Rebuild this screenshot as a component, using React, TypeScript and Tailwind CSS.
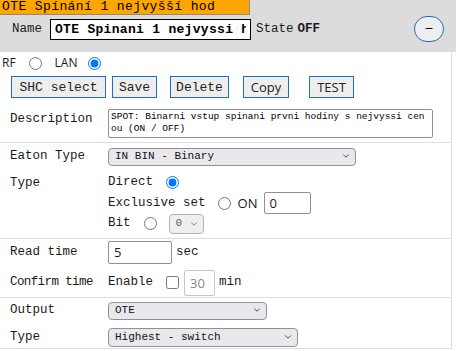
import { ChevronDown } from "lucide-react";

const mono = "font-['Liberation_Mono','DejaVu_Sans_Mono',monospace]";
const sans = "font-['Open_Sans','Liberation_Sans',sans-serif]";

function Sel({ className = "", value }: { className?: string; value: string }) {
  return (
    <div className={`relative ${className}`}>
      <select
        defaultValue={value}
        className={`h-full w-full appearance-none rounded-[4px] border border-[#8f8f9d] bg-[#e9e9ed] pl-[6px] text-[11px] leading-none text-[#111] ${mono}`}
      >
        <option value={value}>{value}</option>
      </select>
      <ChevronDown className="pointer-events-none absolute right-[5px] top-1/2 h-[10px] w-[10px] -translate-y-1/2 text-[#333]" strokeWidth={2} />
    </div>
  );
}

function Btn({ label, className = "", font = mono }: { label: string; className?: string; font?: string }) {
  return (
    <button className={`h-[22px] border border-[#1f6fbf] bg-[#eeeeee] text-[13px] leading-none text-[#222] ${font} ${className}`}>
      {label}
    </button>
  );
}

function Radio({ checked = false, className = "" }: { checked?: boolean; className?: string }) {
  return <input type="radio" defaultChecked={checked} className={`m-0 h-[13px] w-[13px] ${className}`} />;
}

export default function App() {
  return (
    <div className={`h-[351px] w-[456px] overflow-hidden bg-white text-[12.5px] text-[#1a1a1a] ${mono}`}>
      {/* header */}
      <div className="h-[52px] bg-[#dcdcdc]">
        <div className="h-[15px] w-[250px] border-b border-r border-[#8a8a8a] bg-[#ffa500] pl-[2px] text-[13px] leading-[14px] tracking-[0.4px] text-black">
          OTE Spínání 1 nejvyšší hod
        </div>
        <div className="mt-[1px] flex items-center">
          <span className="ml-[12px] w-[38px]">Name</span>
          <input
            defaultValue="OTE Spinani 1 nejvyssi hod"
            className="h-[21px] w-[201px] border border-black bg-white px-[4px] text-[13px] font-bold tracking-[0.3px] text-black outline-none"
          />
          <span className="ml-[5px]">State</span>
          <span className="ml-[4px] font-bold">OFF</span>
          <button className="ml-auto mr-[12px] flex h-[26px] w-[30px] items-center justify-center rounded-full border border-[#1f6fbf] bg-[#eeeeee] text-[14px] text-[#111]">
            −
          </button>
        </div>
      </div>

      {/* body */}
      <div className="h-[297px] w-[452px] border-b border-r border-[#dedede]">
        <div className={`flex h-[21px] items-center pt-[1px] text-[12px] ${sans}`}>
          <span className="ml-[2px]">RF</span>
          <Radio className="ml-[13px]" />
          <span className="ml-[13px]">LAN</span>
          <Radio checked className="ml-[10px]" />
        </div>

        <div className="mt-[3px] flex">
          <Btn label="SHC select" className="ml-[11px] w-[95px]" />
          <Btn label="Save" className="ml-[6px] w-[45px]" />
          <Btn label="Delete" className="ml-[13px] w-[59px]" />
          <Btn label="Copy" font={sans} className="ml-[14px] w-[46px]" />
          <Btn label="TEST" font={sans} className="ml-[20px] w-[45px]" />
        </div>

        <div className="mt-[11px] flex">
          <span className="ml-[10px] w-[98px] pt-[1px]">Description</span>
          <textarea
            defaultValue="SPOT: Binarni vstup spinani prvni hodiny s nejvyssi cenou (ON / OFF)"
            className="h-[29px] w-[325px] resize-none overflow-hidden break-all rounded-[2px] border border-[#8f8f9d] px-[2px] py-[1px] text-[9.5px] leading-[12px] text-black"
          />
        </div>

        <div className="mt-[4px] border-t border-[#dedede]" />

        <div className="mt-[4px] flex items-center">
          <span className="ml-[10px] w-[98px]">Eaton Type</span>
          <Sel value="IN BIN - Binary" className="h-[18px] w-[248px]" />
        </div>

        <div className="mt-[7px] flex">
          <span className="ml-[10px] w-[98px] leading-[20px]">Type</span>
          <div className="flex flex-col">
            <div className="flex h-[20px] items-center">
              <span>Direct</span>
              <Radio checked className="ml-[13px]" />
            </div>
            <div className="flex h-[21px] items-center">
              <span>Exclusive set</span>
              <Radio className="ml-[12px]" />
              <span className={`ml-[7px] text-[13px] ${sans}`}>ON</span>
              <input
                defaultValue="0"
                className={`ml-[7px] h-[22px] w-[47px] rounded-[2px] border border-[#8f8f9d] px-[4px] text-[13px] ${sans}`}
              />
            </div>
            <div className="flex h-[20px] items-center">
              <span>Bit</span>
              <Radio className="ml-[13px]" />
              <Sel value="0" className="ml-[12px] h-[20px] w-[35px] opacity-70" />
            </div>
          </div>
        </div>

        <div className="mt-[4px] border-t border-[#dedede]" />

        <div className="mt-[2px] flex items-center">
          <span className="ml-[10px] w-[98px]">Read time</span>
          <input
            defaultValue="5"
            className={`h-[23px] w-[64px] rounded-[2px] border border-[#8f8f9d] px-[5px] text-[13px] ${sans}`}
          />
          <span className="ml-[4px]">sec</span>
        </div>

        <div className="mt-[6px] flex items-center">
          <span className="ml-[10px] w-[98px] tracking-[-0.6px]">Confirm time</span>
          <span>Enable</span>
          <input type="checkbox" className="m-0 ml-[13px] h-[13px] w-[13px]" />
          <input
            disabled
            defaultValue="30"
            className={`ml-[5px] h-[26px] w-[31px] rounded-[2px] border border-[#c8c8cc] bg-white px-[5px] text-[13px] text-[#888] ${sans}`}
          />
          <span className="ml-[4px]">min</span>
        </div>

        <div className="mt-[1px] border-t border-[#dedede]" />

        <div className="mt-[3px] flex items-center">
          <span className="ml-[10px] w-[98px]">Output</span>
          <Sel value="OTE" className="h-[18px] w-[159px]" />
        </div>

        <div className="mt-[8px] flex items-center">
          <span className="ml-[10px] w-[98px]">Type</span>
          <Sel value="Highest - switch" className="h-[19px] w-[190px]" />
        </div>
      </div>
    </div>
  );
}
